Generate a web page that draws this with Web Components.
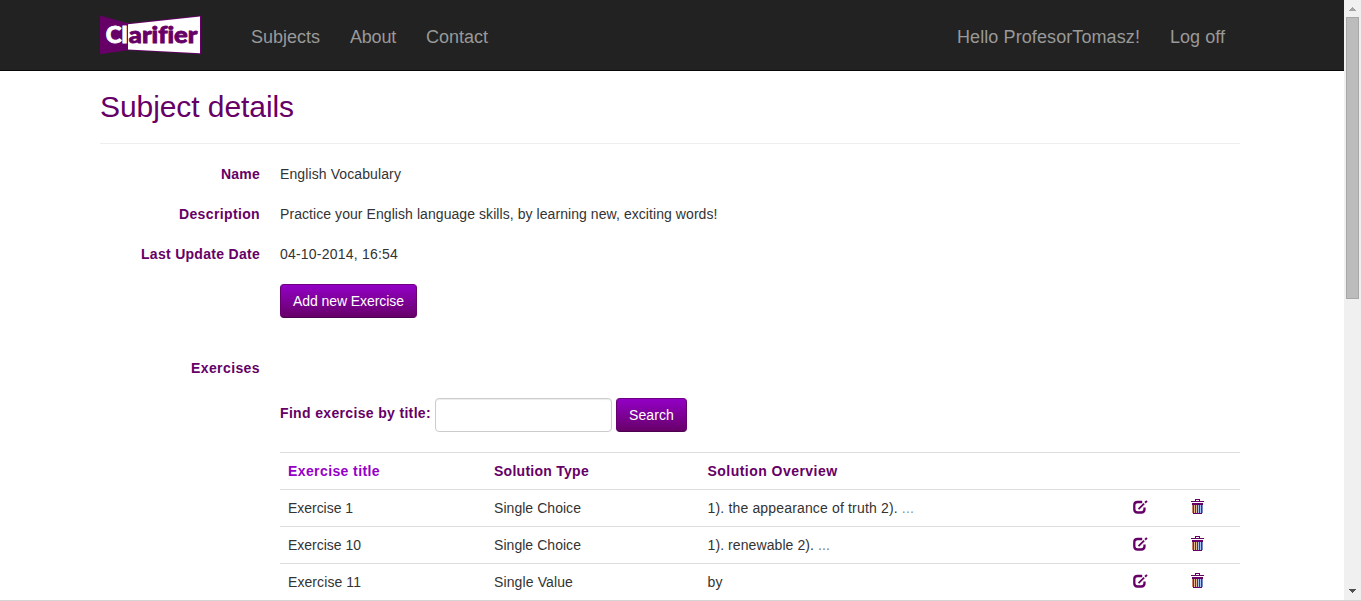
<!DOCTYPE html>
<html lang="en"><head><meta charset="utf-8"><title>Subject details</title>
<style>html,body{margin:0;height:100%;overflow:hidden;background:#fff;font:14px/20px "Liberation Sans",Arial,sans-serif;color:#333}</style></head>
<body><clarifier-app></clarifier-app>
<script>
const define=(name,html,ready)=>customElements.define(name,class extends HTMLElement{
  connectedCallback(){
    if(this.shadowRoot)return;
    const r=this.attachShadow({mode:'open'});
    r.innerHTML=html;
    if(ready)ready.call(this,r);
  }
});

/* Text run whose letter spacing is adjusted to an advance width. */
define('text-run','<style>:host{display:inline-block;white-space:nowrap}</style><span><slot></slot></span>',function(r){
  const s=r.querySelector('span'),w=+this.getAttribute('w');
  const n=s.getBoundingClientRect().width;
  if(w&&n){s.style.letterSpacing=(w-n)/this.textContent.length+'px';this.style.width=w+'px';}
});

define('brand-logo',`<style>:host{display:block;width:102px;height:40px}svg{display:block}text{font-variant-ligatures:none;font-feature-settings:"liga" 0}</style>
<svg width="102" height="40" viewBox="0 0 102 40">
<path d="M0 .6 28 8.2 101 .6V39.3L28 35.2 0 39.3Z" fill="#660066"/>
<path d="M28 9.2 100 1.6V38.3L28 34.4Z" fill="#fff"/>
<g font-family="Lato" font-weight="900" font-size="22.5" stroke-width=".8">
<text x="5.7" y="27.8" fill="#fff" stroke="#fff" textLength="21.8" lengthAdjust="spacingAndGlyphs">Cl</text>
<text x="28.8" y="27.8" fill="#660066" stroke="#660066" textLength="68.6" lengthAdjust="spacingAndGlyphs">arifier</text></g></svg>`);

define('nav-bar',`<style>:host{display:block;height:70px;background:#222;border-bottom:1px solid #080808;color:#999;font-size:18px}
.in{width:1140px;margin-left:100px;height:70px;display:flex;align-items:flex-start;box-sizing:border-box;padding:15px 15px 0 0}
nav{display:flex;gap:30px;margin:12px 0 0 49px}.right{margin-left:auto}</style>
<div class="in"><brand-logo></brand-logo><nav><text-run w="69">Subjects</text-run><text-run w="46">About</text-run><text-run w="62">Contact</text-run></nav>
<nav class="right"><text-run w="183">Hello ProfesorTomasz!</text-run><text-run w="55">Log off</text-run></nav></div>`);

define('page-title',`<style>:host{display:block;height:37px;padding-top:19px;padding-bottom:16px;border-bottom:1px solid #eee;color:#606;font-size:30px;line-height:33px}</style><slot></slot>`);

define('detail-row',`<style>:host{display:flex;gap:20px;height:20px;margin-bottom:20px}
.l{width:160px;text-align:right;font-weight:bold;color:#606}</style><div class="l"><slot name="label"></slot></div><slot></slot>`);

define('purple-button',`<style>:host{display:inline-block;vertical-align:top}
button{box-sizing:border-box;height:34px;padding:6px 12px;border:1px solid #4d004d;border-color:#700082 #66006f #4d004d;border-radius:4px;background:linear-gradient(#9400c8,#606);color:#fff;font:inherit;display:block;background-origin:border-box}</style><button><slot></slot></button>`);

define('search-form',`<style>:host{display:flex;height:34px;margin-bottom:20px}
label{font-weight:bold;color:#606;margin:5px 4px 0 0}
input{box-sizing:border-box;width:177px;height:34px;border:1px solid #ccc;border-radius:4px;box-shadow:inset 0 1px 1px #00000013;margin:0 4px 0 0;padding:6px 12px;font:inherit}</style>
<label><text-run w="151">Find exercise by title:</text-run></label><input aria-label="Title"><purple-button><text-run w="45">Search</text-run></purple-button>`);

define('edit-icon',`<style>:host{display:block;width:15px;height:14px}svg{display:block}</style>
<svg width="15" height="14" viewBox="0 0 15 14" fill="none" stroke="#606"><path d="M9.2 2H4.6Q1.3 2 1.3 5V9.2Q1.3 12.5 4.6 12.5H8.2Q11.5 12.5 11.5 9.2V7.6" stroke-width="2.3"/><path d="M5.5 9.2 11.1 3.6" stroke-width="1.8"/><path d="M12.1 2.7 13.9.9" stroke-width="2"/></svg>`);

define('trash-icon',`<style>:host{display:block;width:13px;height:16px}svg{display:block}</style>
<svg width="13" height="16" viewBox="0 0 13 16" shape-rendering="crispEdges"><path d="M4 0h5v2h4v1H0V2h4ZM5 1v1h3V1Z" fill="#606" fill-rule="evenodd"/><path d="M1 4h11v2H1zM2 14h9v1H2z" fill="#606"/><path d="M1 6h1v8H1z" fill="#c78270"/><path d="M2 6h1v8H2zM4 6h1v8H4zM6 6h1v8H6zM8 6h1v8H8zM10 6h1v8h-1z" fill="#70206e"/><path d="M3 6h1v8H3zM5 6h1v8H5z" fill="#e6ba94"/><path d="M7 6h1v8H7zM9 6h1v8H9z" fill="#a9c5f0"/><path d="M11 6h1v8h-1z" fill="#7888cc"/></svg>`);

define('exercise-row',`<style>:host{display:grid;grid-template-columns:206px 213.5px 425.5px 58px 1fr;height:20px;padding:8px 0 8px 8px;border-top:1px solid #ddd}
:host([head]){font-weight:bold;color:#606}:host([head]) .t{color:#9400c8}edit-icon{margin-top:2px}trash-icon{margin-top:1px}</style>
<div class="t"><slot name="title"></slot></div><div><slot name="type"></slot></div><div><slot></slot></div>`,function(r){
  if(!this.hasAttribute('head'))r.append(document.createElement('edit-icon'),document.createElement('trash-icon'));
});

define('scroll-bar',`<style>:host{display:flex;flex-direction:column;align-items:center;width:17px;height:600px;background:#f0f0f0}
svg{display:block;flex:none}.thumb{box-sizing:border-box;width:13px;height:282px;border:1px solid #a8a8a8;background:#bcbcbc;margin-bottom:auto}</style>
<svg width="17" height="17" shape-rendering="crispEdges"><path d="M8 7h1v1h1v1h1v1h1v1H5v-1h1V9h1V8h1z" fill="#a3a3a3"/></svg><div class="thumb"></div>
<svg width="17" height="17" shape-rendering="crispEdges"><path d="M5 6h7v1h-1v1h-1v1H9v1H8V9H7V8H6V7H5z" fill="#505050"/></svg>`);

define('clarifier-app',`<style>:host{display:flex;height:600px;border-bottom:1px solid #d4d4d4;overflow:hidden}
.page{width:1344px;flex:none;height:600px;overflow:hidden}main{width:1140px;margin-left:100px}
.details{padding-top:20px}.indent{margin-left:180px}.add{height:34px;margin-bottom:40px}</style>
<div class="page"><nav-bar></nav-bar><main><page-title><text-run w="194">Subject details</text-run></page-title>
<div class="details">
<detail-row><text-run slot="label" w="39">Name</text-run><text-run w="121">English Vocabulary</text-run></detail-row>
<detail-row><text-run slot="label" w="81">Description</text-run><text-run w="437.5">Practice your English language skills, by learning new, exciting words!</text-run></detail-row>
<detail-row><text-run slot="label" w="119">Last Update Date</text-run><text-run w="118">04-10-2014, 16:54</text-run></detail-row>
<div class="indent add"><purple-button><text-run w="111">Add new Exercise</text-run></purple-button></div>
<detail-row><text-run slot="label" w="69">Exercises</text-run></detail-row></div>
<div class="indent"><search-form></search-form>
<exercise-row head><text-run slot="title" w="92">Exercise title</text-run><text-run slot="type" w="95">Solution Type</text-run><text-run w="130">Solution Overview</text-run></exercise-row>
<exercise-row><text-run slot="title" w="65">Exercise 1</text-run><text-run slot="type" w="87">Single Choice</text-run><text-run w="206.5">1). the appearance of truth 2). <span style="color:#7a97a8">...</span></text-run></exercise-row>
<exercise-row><text-run slot="title" w="73">Exercise 10</text-run><text-run slot="type" w="87">Single Choice</text-run><text-run w="122.5">1). renewable 2). <span style="color:#777">...</span></text-run></exercise-row>
<exercise-row><text-run slot="title" w="73">Exercise 11</text-run><text-run slot="type" w="79">Single Value</text-run><text-run w="15">by</text-run></exercise-row>
</div></main></div><scroll-bar></scroll-bar>`);
</script></body></html>
